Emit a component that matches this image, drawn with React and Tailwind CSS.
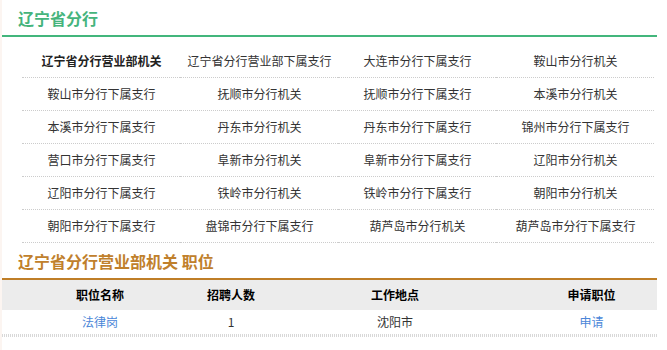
const branches = [
  '辽宁省分行营业部机关', '辽宁省分行营业部下属支行', '大连市分行下属支行', '鞍山市分行机关',
  '鞍山市分行下属支行', '抚顺市分行机关', '抚顺市分行下属支行', '本溪市分行机关',
  '本溪市分行下属支行', '丹东市分行机关', '丹东市分行下属支行', '锦州市分行下属支行',
  '营口市分行下属支行', '阜新市分行机关', '阜新市分行下属支行', '辽阳市分行机关',
  '辽阳市分行下属支行', '铁岭市分行机关', '铁岭市分行下属支行', '朝阳市分行机关',
  '朝阳市分行下属支行', '盘锦市分行下属支行', '葫芦岛市分行机关', '葫芦岛市分行下属支行',
]

const jobs = [{ name: '法律岗', count: 1, place: '沈阳市' }]

export default function App() {
  return (
    <div className="flex h-[350px] w-[667px] overflow-hidden bg-white text-[12px] text-[#333]" style={{ fontFamily: '"Microsoft YaHei", "Noto Sans CJK SC", sans-serif' }}>
      <div className="w-[2px] bg-[#fcf5f1]" />
      <div className="w-[655px]">
        <div className="flex h-[35px] items-center pl-4 text-[16px] font-bold leading-none text-[#45b47c]">辽宁省分行</div>
        <div className="h-[2px] bg-[#43b67c]" />

        <div className="ml-[20px] mt-2 grid w-[632px] grid-cols-4">
          {branches.map((b, i) => (
            <div key={b} className={`h-[33px] border-b border-dotted border-[#ccc] pl-px text-center leading-[32px] ${i === 0 ? 'font-bold text-[#222]' : ''}`}>
              {b}
            </div>
          ))}
        </div>

        <div className="flex h-[35px] items-center pl-4 text-[16px] font-bold leading-none text-[#c0802c]">辽宁省分行营业部机关 职位</div>
        <div className="h-[2px] bg-[#bf7e27]" />

        <div className="grid h-[30px] grid-cols-[196px_66px_262px_131px] items-center bg-[#ececec] text-center font-bold text-black">
          <div>职位名称</div>
          <div>招聘人数</div>
          <div>工作地点</div>
          <div>申请职位</div>
        </div>
        {jobs.map(j => (
          <div key={j.name} className="grid h-[24px] grid-cols-[196px_66px_262px_131px] items-center text-center">
            <a className="text-[#4a86d8]">{j.name}</a>
            <div>{j.count}</div>
            <div>{j.place}</div>
            <a className="text-[#4a86d8]">申请</a>
          </div>
        ))}
        <div className="h-[3px] bg-[repeating-linear-gradient(90deg,#d8d8d8_0_1px,transparent_1px_2px)]" />
      </div>
    </div>
  )
}
